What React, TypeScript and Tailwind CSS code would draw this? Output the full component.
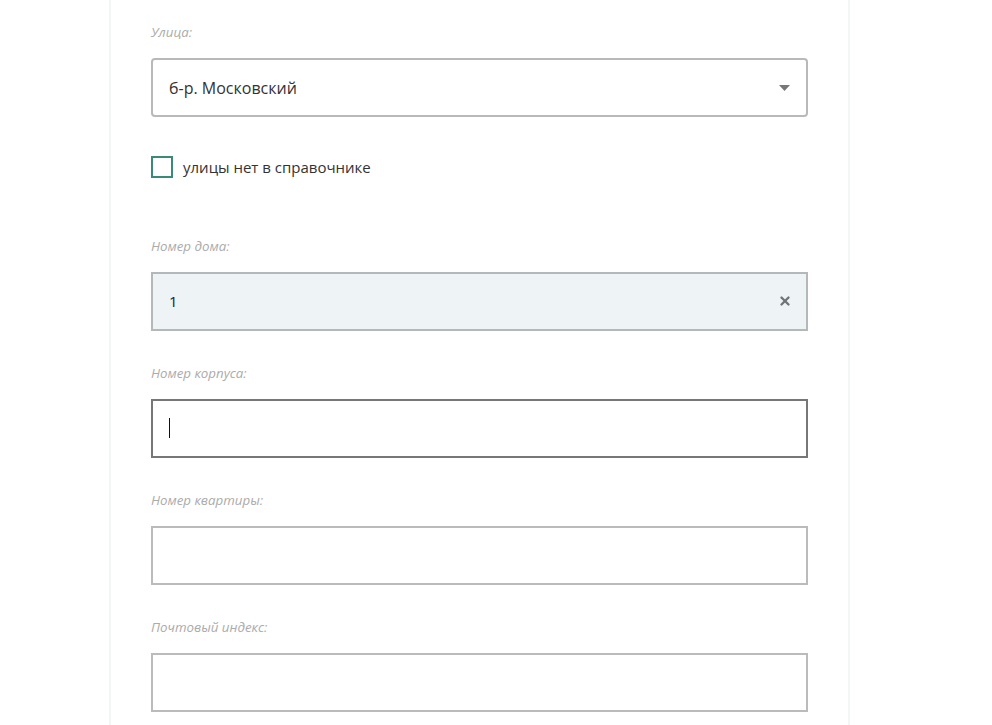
import { X } from 'lucide-react';

const labelCls = 'block h-[18px] text-[13.3px] leading-[18px] italic text-[#ababab] mb-[17px]';

function Field({ label, children, className = '' }: { label: string; children: React.ReactNode; className?: string }) {
  return (
    <div className={className}>
      <span className={labelCls}>{label}</span>
      {children}
    </div>
  );
}

export default function App() {
  return (
    <div className="h-[725px] overflow-hidden bg-white" style={{ fontFamily: '"Open Sans", "Liberation Sans", sans-serif' }}>
      <div className="ml-[109px] w-[741px] h-full border-x-2 border-[#f4f5f5] pl-[40px] pr-[39px] pt-[23px]">
        {/* Street */}
        <Field label="Улица:">
          <div className="flex items-center justify-between h-[59px] w-[657px] rounded-[4px] border-2 border-[#b9b9b9] bg-white pl-[16px] pr-[15px]">
            <span className="text-[16px] text-[#333]">б-р. Московский</span>
            <svg width="11" height="6" viewBox="0 0 11 6" className="mr-[1px]">
              <path d="M0 0h11L5.5 6z" fill="#777" />
            </svg>
          </div>
        </Field>

        <label className="flex items-center gap-[10px] mt-[39px]">
          <span className="w-[22px] h-[22px] border-2 border-[#3a8a79] bg-white" />
          <span className="text-[15px] text-[#333]">улицы нет в справочнике</span>
        </label>

        <Field label="Номер дома:" className="mt-[58px]">
          <div className="flex items-center justify-between h-[59px] w-[657px] border-2 border-[#b5b8b8] bg-[#eef3f6] pl-[16px] pr-[14px]">
            <span className="text-[15px] font-medium text-[#222]">1</span>
            <X size={14} strokeWidth={4} className="text-[#6f7477]" />
          </div>
        </Field>

        <Field label="Номер корпуса:" className="mt-[33px]">
          <div className="flex items-center h-[59px] w-[657px] border-2 border-[#777] bg-white pl-[16px]">
            <span className="w-px h-[20px] bg-[#111]" />
          </div>
        </Field>

        <Field label="Номер квартиры:" className="mt-[33px]">
          <div className="h-[59px] w-[657px] border-2 border-[#bbb] bg-white" />
        </Field>

        <Field label="Почтовый индекс:" className="mt-[33px]">
          <div className="h-[59px] w-[657px] border-2 border-[#bbb] bg-white" />
        </Field>
      </div>
    </div>
  );
}
